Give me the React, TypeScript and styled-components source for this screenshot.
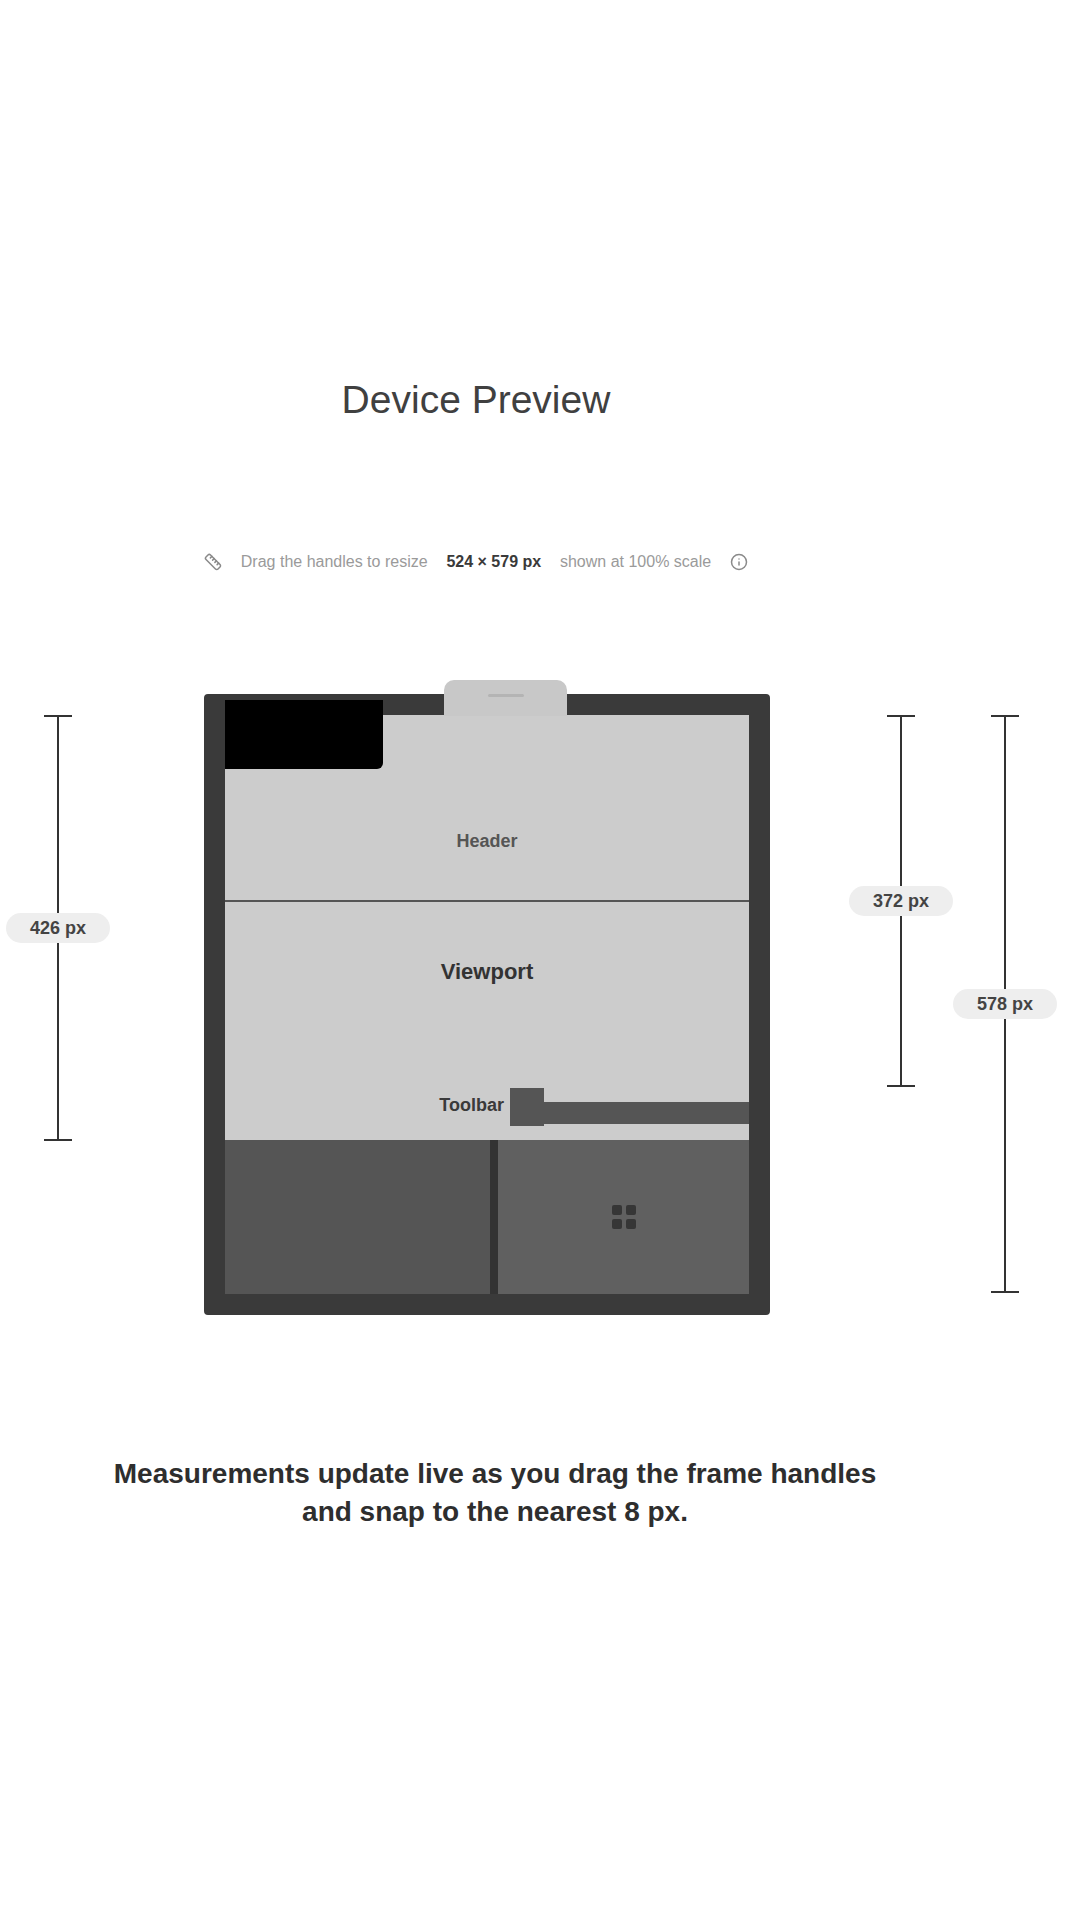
import React from 'react';
import styled, { createGlobalStyle } from 'styled-components';
import { Ruler, Info } from 'lucide-react';

const GlobalStyle = createGlobalStyle`
  html, body {
    margin: 0;
    padding: 0;
    background: #ffffff;
  }
  body {
    font-family: "Liberation Sans", Arial, sans-serif;
    -webkit-font-smoothing: antialiased;
  }
`;

// measured regions of the preview screen, in px
const DIMENSIONS = {
  content: 426,
  toolbar: 372,
  screen: 578,
};

const Page = styled.div`
  width: 1080px;
  min-height: 1920px;
  display: flex;
  flex-direction: column;
  background: #ffffff;
`;

const Header = styled.header`
  display: flex;
  flex-direction: column;
  align-items: center;
  padding: 376px 128px 0 0;
`;

const Title = styled.h1`
  margin: 0;
  font-size: 39px;
  line-height: 48px;
  font-weight: 400;
  color: #404040;
`;

const Subtitle = styled.div`
  margin-top: 126px;
  width: 544px;
  height: 24px;
  display: flex;
  align-items: center;
  justify-content: space-between;
  font-size: 16px;
  line-height: 24px;
  color: #9a9a9a;
`;

const Strong = styled.span`
  font-weight: 700;
  color: #3a3a3a;
`;

const Stage = styled.section`
  margin-top: 120px;
  display: grid;
  grid-template-columns: 204px 566px 1fr;
  align-items: start;
`;

const DimColumn = styled.div<{ $offset: number }>`
  display: flex;
  align-items: flex-start;
  padding-left: ${p => p.$offset}px;
`;

const Dim = styled.div<{ $h: number }>`
  margin-top: 21px;
  width: 104px;
  height: ${p => p.$h}px;
  display: flex;
  flex-direction: column;
  align-items: center;
`;

const DimTick = styled.div`
  flex: none;
  width: 28px;
  height: 2px;
  background: #333333;
`;

const DimLine = styled.div`
  flex: 1;
  width: 2px;
  background: #333333;
`;

const DimLabel = styled.div`
  flex: none;
  width: 104px;
  height: 30px;
  border-radius: 15px;
  background: #eeeeee;
  display: flex;
  align-items: center;
  justify-content: center;
  font-size: 18px;
  font-weight: 700;
  color: #444444;
`;

const Frame = styled.div`
  position: relative;
  box-sizing: border-box;
  height: 621px;
  border: 21px solid #3a3a3a;
  border-radius: 4px;
  background: #cccccc;
  display: flex;
  flex-direction: column;
`;

const Notch = styled.div`
  position: absolute;
  left: 0;
  top: -15px;
  width: 158px;
  height: 69px;
  background: #000000;
  border-radius: 0 0 6px 0;
`;

const TopHandle = styled.div`
  position: absolute;
  left: 219px;
  top: -35px;
  width: 123px;
  height: 36px;
  border-radius: 10px 10px 0 0;
  background: #c8c8c8;
  display: flex;
  justify-content: center;
  padding-top: 14px;
  box-sizing: border-box;
`;

const Grip = styled.div`
  width: 36px;
  height: 3px;
  border-radius: 2px;
  background: #b4b4b4;
`;

const Content = styled.div`
  flex: 1;
  display: flex;
  flex-direction: column;
  align-items: center;
`;

const SectionLabel = styled.div`
  margin-top: 114px;
  font-size: 18px;
  line-height: 24px;
  font-weight: 700;
  color: #555555;
`;

const Divider = styled.div`
  align-self: stretch;
  margin-top: 47px;
  height: 2px;
  background: #555555;
`;

const ViewLabel = styled.div`
  margin-top: 56px;
  font-size: 22px;
  line-height: 28px;
  font-weight: 700;
  color: #333333;
`;

const ToolRow = styled.div`
  flex: none;
  height: 52px;
  display: flex;
  justify-content: flex-end;
  align-items: flex-start;
`;

const ToolLabel = styled.div`
  margin: 5px 6px 0 0;
  font-size: 18px;
  line-height: 24px;
  font-weight: 700;
  color: #3a3a3a;
`;

const DockHandle = styled.div`
  width: 34px;
  height: 38px;
  background: #555555;
`;

const DockStrip = styled.div`
  width: 205px;
  height: 22px;
  margin-top: 14px;
  background: #555555;
`;

const BottomPanel = styled.div`
  flex: none;
  height: 154px;
  display: grid;
  grid-template-columns: 265px 8px 1fr;
`;

const Pane = styled.div<{ $tone: string }>`
  background: ${p => p.$tone};
  display: flex;
  align-items: center;
  justify-content: center;
`;

const Caption = styled.footer`
  margin-top: 140px;
  padding-right: 90px;
  text-align: center;
  font-size: 28px;
  line-height: 38px;
  font-weight: 700;
  color: #2e2e2e;
`;

const CaptionLine = styled.div``;

const Dimension: React.FC<{ height: number; value: number }> = ({ height, value }) => (
  <Dim $h={height}>
    <DimTick />
    <DimLine />
    <DimLabel>{value} px</DimLabel>
    <DimLine />
    <DimTick />
  </Dim>
);

const App: React.FC = () => {
  return (
    <Page>
      <GlobalStyle />
      <Header>
        <Title>Device Preview</Title>
        <Subtitle>
          <Ruler size={18} color="#8a8a8a" strokeWidth={2} />
          <span>Drag the handles to resize</span>
          <Strong>524 × 579 px</Strong>
          <span>shown at 100% scale</span>
          <Info size={18} color="#8a8a8a" strokeWidth={2} />
        </Subtitle>
      </Header>

      <Stage>
        <DimColumn $offset={6}>
          <Dimension height={DIMENSIONS.content} value={DIMENSIONS.content} />
        </DimColumn>

        <Frame>
          <TopHandle>
            <Grip />
          </TopHandle>
          <Notch />
          <Content>
            <SectionLabel>Header</SectionLabel>
            <Divider />
            <ViewLabel>Viewport</ViewLabel>
          </Content>
          <ToolRow>
            <ToolLabel>Toolbar</ToolLabel>
            <DockHandle />
            <DockStrip />
          </ToolRow>
          <BottomPanel>
            <Pane $tone="#555555" />
            <Pane $tone="#333333" />
            <Pane $tone="#606060">
              <svg width="26" height="26" viewBox="0 0 26 26">
                <rect x="1" y="1" width="10" height="10" rx="2" fill="#363636" />
                <rect x="15" y="1" width="10" height="10" rx="2" fill="#363636" />
                <rect x="1" y="15" width="10" height="10" rx="2" fill="#363636" />
                <rect x="15" y="15" width="10" height="10" rx="2" fill="#363636" />
              </svg>
            </Pane>
          </BottomPanel>
        </Frame>

        <DimColumn $offset={79}>
          <Dimension height={DIMENSIONS.toolbar} value={DIMENSIONS.toolbar} />
          <Dimension height={DIMENSIONS.screen} value={DIMENSIONS.screen} />
        </DimColumn>
      </Stage>

      <Caption>
        <CaptionLine>Measurements update live as you drag the frame handles</CaptionLine>
        <CaptionLine>and snap to the nearest 8 px.</CaptionLine>
      </Caption>
    </Page>
  );
};

export default App;
